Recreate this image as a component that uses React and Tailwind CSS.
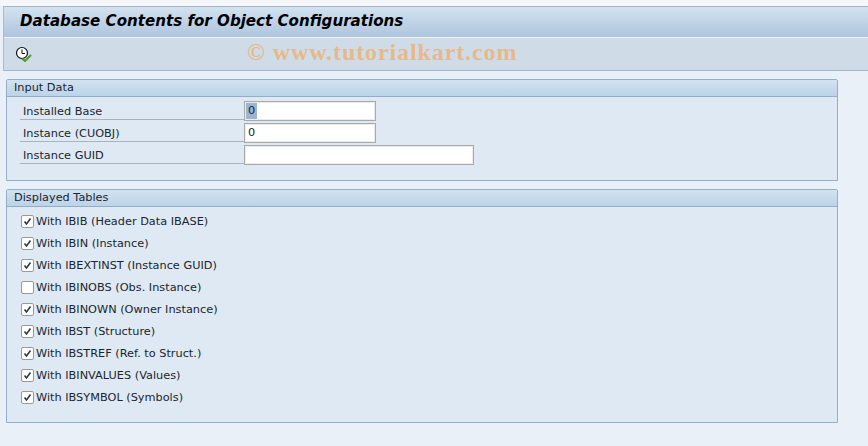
const inputRows = [
	{ label: "Installed Base", value: "0", selected: true, width: "w-[132px]" },
	{ label: "Instance (CUOBJ)", value: "0", width: "w-[132px]" },
	{ label: "Instance GUID", value: "", width: "w-[230px]" },
];

const tables = [
	{ label: "With IBIB (Header Data IBASE)", checked: true },
	{ label: "With IBIN (Instance)", checked: true },
	{ label: "With IBEXTINST (Instance GUID)", checked: true },
	{ label: "With IBINOBS (Obs. Instance)", checked: false },
	{ label: "With IBINOWN (Owner Instance)", checked: true },
	{ label: "With IBST (Structure)", checked: true },
	{ label: "With IBSTREF (Ref. to Struct.)", checked: true },
	{ label: "With IBINVALUES (Values)", checked: true },
	{ label: "With IBSYMBOL (Symbols)", checked: true },
];

const ExecuteIcon = () => (
	<svg width="18" height="16" viewBox="0 0 18 16" fill="none">
		<circle cx="7" cy="7" r="5.5" fill="#fff" stroke="#111" strokeWidth="1.2" />
		<path d="M7 3.5V7.5H10" stroke="#111" strokeWidth="1" />
		<path d="M7 12.5L10 15L16 9" stroke="#4d9a1e" strokeWidth="2" />
	</svg>
);

const Panel = ({ title, className, children }) => (
	<section
		className={`border border-[#91afcb] rounded-tr-[2px] rounded-tl-[2px] bg-[#deE9f3] ${className}`}
	>
		<h2 className="h-[17px] pl-[7px] flex items-center border-b border-[#91afcb] bg-gradient-to-b from-[#d3e2f0] to-[#bcd3e8] text-[11.3px] font-normal">
			{title}
		</h2>
		{children}
	</section>
);

const CheckBox = ({ checked }) => (
	<span className="w-[13px] h-[13px] mb-[1px] shrink-0 flex items-center justify-center rounded-[2px] border border-[#9a9a9a] bg-white">
		{checked && (
			<svg width="9" height="9" viewBox="0 0 9 9" fill="none">
				<path d="M1.5 4.5L3.5 7L7.5 1.5" stroke="#2a3a4a" strokeWidth="1.6" />
			</svg>
		)}
	</span>
);

export default function App() {
	return (
		<div className="w-[868px] h-[446px] overflow-hidden bg-[#e9f0f7] font-['DejaVu_Sans',sans-serif] text-[11.3px] text-[#1a2530]">
			<div className="h-[6px] bg-[#f4f6fa]" />
			<div className="ml-[3px] border-l border-[#a9bbcd]">
				<header className="h-[31px] border-t border-[#a3b3c8] pl-[16px] pb-[2px] flex items-center bg-gradient-to-b from-[#d2e2f0] to-[#aec5dd]">
					<h1 className="text-[15.1px] font-bold italic text-black">
						Database Contents for Object Configurations
					</h1>
				</header>
				<div className="h-[34px] border-t border-[#eef3f8] border-b border-b-[#a3b5c9] bg-[#cfdce7] flex items-center pl-[11px]">
					<ExecuteIcon />
					<span className="ml-[214px] -mt-[4px] font-['Liberation_Serif',serif] font-bold text-[24px] tracking-[0.9px] text-[#e6b98c]">
						© www.tutorialkart.com
					</span>
				</div>
			</div>

			<div className="mt-[8px] ml-[6px] w-[832px] flex flex-col gap-[8px]">
				<Panel title="Input Data" className="h-[102px]">
					<div className="pt-[4px] pl-[13px] flex flex-col gap-[3px]">
						{inputRows.map((row) => (
							<div key={row.label} className="flex h-[19px]">
								<label className="w-[224px] pl-[3px] pt-[4px] border-b border-[#a8b3bd] flex items-center">
									{row.label}
								</label>
								<div
									className={`${row.width} h-[20px] border border-[#a9a9a9] bg-white pl-[1px] flex items-center shadow-[inset_0_0_0_1px_#ececec]`}
								>
									<span className={`px-[2px] ${row.selected ? "bg-[#9ab5d3]" : ""}`}>
										{row.value}
									</span>
								</div>
							</div>
						))}
					</div>
				</Panel>

				<Panel title="Displayed Tables" className="h-[234px]">
					<div className="pt-[4px] pl-[14px] flex flex-col">
						{tables.map((table) => (
							<div key={table.label} className="h-[22px] flex items-center gap-[2px]">
								<CheckBox checked={table.checked} />
								<span>{table.label}</span>
							</div>
						))}
					</div>
				</Panel>
			</div>
		</div>
	);
}
